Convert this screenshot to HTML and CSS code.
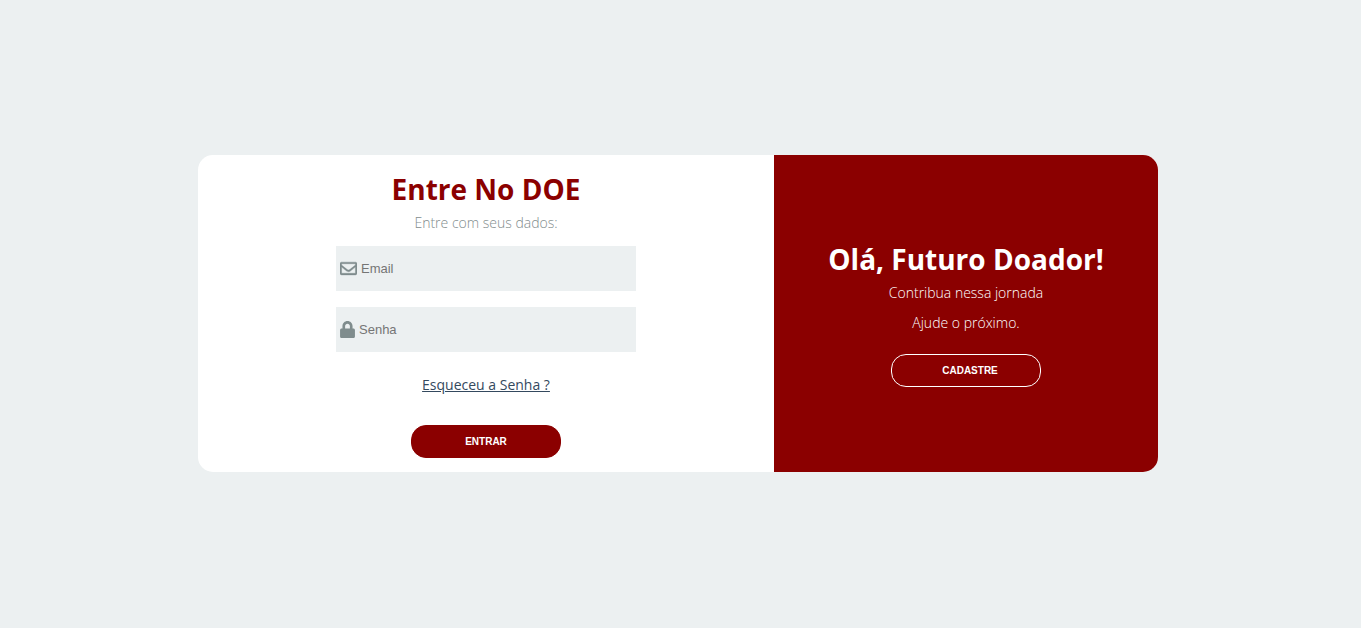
FILE: index.html
```html
<!DOCTYPE html>
<html lang="pt-BR">
<head>
<meta charset="utf-8">
<meta name="viewport" content="width=device-width, initial-scale=1">
<title>Entre No DOE</title>
<link rel="stylesheet" href="styles.css">
</head>
<body>
<main class="card">
  <section class="login">
    <h1 class="title title-primary">Entre No DOE</h1>
    <p class="description">Entre com seus dados:</p>
    <form class="form">
      <label class="field">
        <svg class="icon icon-mail" width="17" height="17" viewBox="0 0 512 512" aria-hidden="true"><path d="M464 64H48C21.490 64 0 85.490 0 112v288c0 26.510 21.490 48 48 48h416c26.510 0 48-21.490 48-48V112c0-26.510-21.490-48-48-48zm0 48v40.805c-22.422 18.259-58.168 46.651-134.587 106.490-16.841 13.247-50.201 45.072-73.413 44.701-23.208.375-56.579-31.459-73.413-44.701C106.180 199.465 70.425 171.067 48 152.805V112h416zM48 400V214.398c22.914 18.251 55.409 43.862 104.938 82.646 21.857 17.205 60.134 55.186 103.062 54.955 42.717.231 80.509-37.199 103.053-54.947 49.528-38.783 82.032-64.401 104.947-82.653V400H48z"/></svg>
        <input class="input" type="email" placeholder="Email" aria-label="Email">
      </label>
      <label class="field">
        <svg class="icon" width="15" height="17" viewBox="0 0 448 512" aria-hidden="true"><path d="M400 224h-24v-72C376 68.200 307.800 0 224 0S72 68.200 72 152v72H48c-26.500 0-48 21.500-48 48v192c0 26.500 21.500 48 48 48h352c26.500 0 48-21.500 48-48V272c0-26.500-21.500-48-48-48zm-104 0H152v-72c0-39.700 32.300-72 72-72s72 32.300 72 72v72z"/></svg>
        <input class="input" type="password" placeholder="Senha" aria-label="Senha">
      </label>
      <a class="forgot" href="#">Esqueceu a Senha ?</a>
      <button class="btn btn-primary" type="submit">Entrar</button>
    </form>
  </section>
  <section class="welcome">
    <h2 class="title">Olá, Futuro Doador!</h2>
    <p class="message">Contribua nessa jornada</p>
    <p class="message">Ajude o próximo.</p>
    <button class="btn btn-outline" type="button">Cadastre</button>
  </section>
</main>
</body>
</html>
```
FILE: styles.css
```css
* { box-sizing: border-box; margin: 0; padding: 0; }
body {
  min-height: 100vh;
  display: flex;
  align-items: center;
  justify-content: center;
  background: #ecf0f1;
  font-family: "Open Sans", sans-serif;
  font-size: 14px;
}
.card {
  display: grid;
  grid-template-columns: 3fr 2fr;
  width: 960px;
  max-width: 100%;
  margin: 0 5px 1px 0;
  border-radius: 15px;
  overflow: hidden;
  background: #fff;
}
.login, .welcome {
  display: flex;
  flex-direction: column;
  align-items: center;
}
.login { padding: 15px 16px 14px; }
.welcome {
  justify-content: center;
  background: #8b0000;
  color: #fff;
}
.title { font-size: 28px; font-weight: 700; line-height: 38px; }
.title-primary { color: #8b0000; }
.description { color: #7f8c8d; font-weight: 300; line-height: 30px; }
.form {
  display: flex;
  flex-direction: column;
  align-items: center;
  width: 100%;
  padding-top: 8px;
}
.field {
  display: flex;
  align-items: center;
  gap: 4px;
  width: 300px;
  max-width: 100%;
  height: 45px;
  margin-bottom: 16px;
  padding: 0 4px;
  background: #ecf0f1;
}
.icon { flex: none; fill: #7f8c8d; }
.icon-mail { stroke: #7f8c8d; stroke-width: 12; }
.input {
  flex: 1;
  min-width: 0;
  height: 100%;
  border: 0;
  background: transparent;
  font-family: "Liberation Sans", Arial, sans-serif;
  font-size: 13px;
}
.input::placeholder { color: #757575; }
.forgot { margin: 7px 0 31px; color: #34495e; line-height: 19px; }
.btn {
  width: 150px;
  height: 33px;
  border: 1px solid #8b0000;
  border-radius: 15px;
  color: #fff;
  font-family: "Liberation Sans", Arial, sans-serif;
  font-size: 10px;
  font-weight: 700;
  text-transform: uppercase;
  cursor: pointer;
}
.btn-primary { background: #8b0000; }
.btn-outline { margin-top: 16px; padding-left: 8px; background: transparent; border-color: #fff; }
.message { font-weight: 300; line-height: 30px; }
```
